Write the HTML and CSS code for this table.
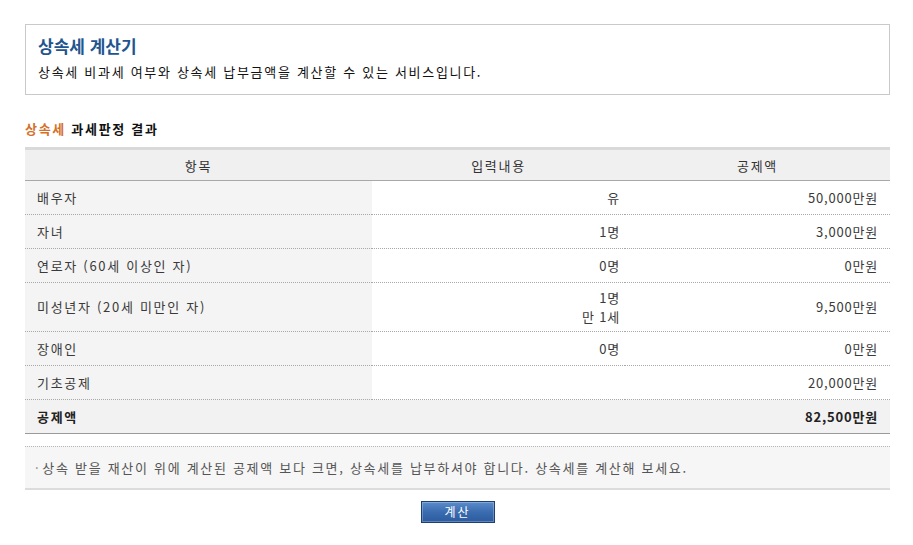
FILE: index.html
```html
<!DOCTYPE html>
<html lang="ko">
<head>
<meta charset="utf-8">
<title>상속세 계산기</title>
<link rel="stylesheet" href="styles.css">
</head>
<body>
<div class="page">
  <div class="intro">
    <h1 class="intro-title">상속세 계산기</h1>
    <p class="intro-desc">상속세 비과세 여부와 상속세 납부금액을 계산할 수 있는 서비스입니다.</p>
  </div>

  <h2 class="section-title"><span class="accent">상속세</span> 과세판정 결과</h2>

  <table class="result">
    <colgroup>
      <col class="c1"><col class="c2"><col class="c3">
    </colgroup>
    <thead>
      <tr><th>항목</th><th>입력내용</th><th>공제액</th></tr>
    </thead>
    <tbody>
      <tr><td class="label">배우자</td><td class="input">유</td><td class="amount">50,000만원</td></tr>
      <tr><td class="label">자녀</td><td class="input">1명</td><td class="amount">3,000만원</td></tr>
      <tr><td class="label">연로자 (60세 이상인 자)</td><td class="input">0명</td><td class="amount">0만원</td></tr>
      <tr class="tall"><td class="label">미성년자 (20세 미만인 자)</td><td class="input"><div class="line">1명</div><div class="line">만 1세</div></td><td class="amount">9,500만원</td></tr>
      <tr><td class="label">장애인</td><td class="input">0명</td><td class="amount">0만원</td></tr>
      <tr><td class="label">기초공제</td><td class="input"></td><td class="amount">20,000만원</td></tr>
      <tr class="total"><td class="label">공제액</td><td class="input"></td><td class="amount">82,500만원</td></tr>
    </tbody>
  </table>

  <div class="note"><span class="bullet">·</span>상속 받을 재산이 위에 계산된 공제액 보다 크면, 상속세를 납부하셔야 합니다. 상속세를 계산해 보세요.</div>

  <div class="actions">
    <button class="btn" type="button">계산</button>
  </div>
</div>
</body>
</html>
```

FILE: styles.css
```css
* { box-sizing: border-box; }
html, body { margin: 0; padding: 0; background: #ffffff; }
body {
  font-family: "Noto Sans CJK KR", "Noto Sans", sans-serif;
  font-size: 13px;
  color: #3a3a3a;
  letter-spacing: 1.7px;
}
.page {
  width: 865px;
  margin-left: 25px;
  padding-top: 24px;
}
.intro {
  border: 1px solid #c9c9c9;
  padding: 10px 12px 13px;
}
.intro-title {
  margin: 0 0 6px;
  font-size: 17px;
  line-height: 22px;
  font-weight: 700;
  letter-spacing: 0;
  color: #22558f;
}
.intro-desc {
  margin: 0;
  line-height: 18px;
  color: #111;
}
.section-title {
  margin: 25px 0 9px;
  font-size: 13px;
  line-height: 18px;
  font-weight: 700;
  color: #111;
}
.accent { color: #d4702a; }

.result {
  width: 865px;
  border-collapse: separate;
  border-spacing: 0;
  table-layout: fixed;
}
.result col.c1 { width: 347px; }
.result col.c2 { width: 253px; }
.result col.c3 { width: 265px; }
.result th {
  height: 34px;
  padding: 0;
  background: #f0f0f0;
  border-top: 3px solid #d9d9d9;
  border-bottom: 1px solid #a8a8a8;
  font-weight: 400;
  color: #333;
  text-align: center;
  vertical-align: middle;
}
.result td {
  height: 34px;
  padding: 0;
  border-bottom: 1px dotted #a8a8a8;
  vertical-align: middle;
  line-height: 16px;
}
.result tr.tall td { height: 49px; }
.result td.label {
  background: #f4f4f4;
  padding-left: 12px;
}
.result td.input {
  text-align: right;
  padding-right: 5px;
  letter-spacing: 0.8px;
}
.result td.input .line {
  line-height: 19px;
}
.result td.amount {
  text-align: right;
  padding-right: 12px;
  letter-spacing: 0.8px;
}
.result tr.total td {
  background: #f2f2f2;
  border-bottom: 1px solid #9a9a9a;
  font-weight: 700;
  color: #222;
}
.note {
  margin-top: 12px;
  height: 44px;
  border-top: 1px dotted #b5b5b5;
  border-bottom: 2px solid #dcdcdc;
  background: #f6f6f6;
  padding-left: 10px;
  display: flex;
  align-items: center;
  color: #555;
}
.bullet {
  margin-right: 2px;
  color: #888;
}
.actions {
  display: flex;
  justify-content: center;
  margin-top: 11px;
}
.btn {
  width: 74px;
  height: 22px;
  padding: 0;
  border: 1px solid #1d3f72;
  background: linear-gradient(#5b8ccb, #3a6cb0 50%, #2d5c9f);
  color: #ffffff;
  font-family: "Noto Sans CJK KR", sans-serif;
  font-size: 12px;
  letter-spacing: 2px;
  line-height: 20px;
  box-shadow: inset 0 0 0 1px rgba(255,255,255,0.25);
}
```
